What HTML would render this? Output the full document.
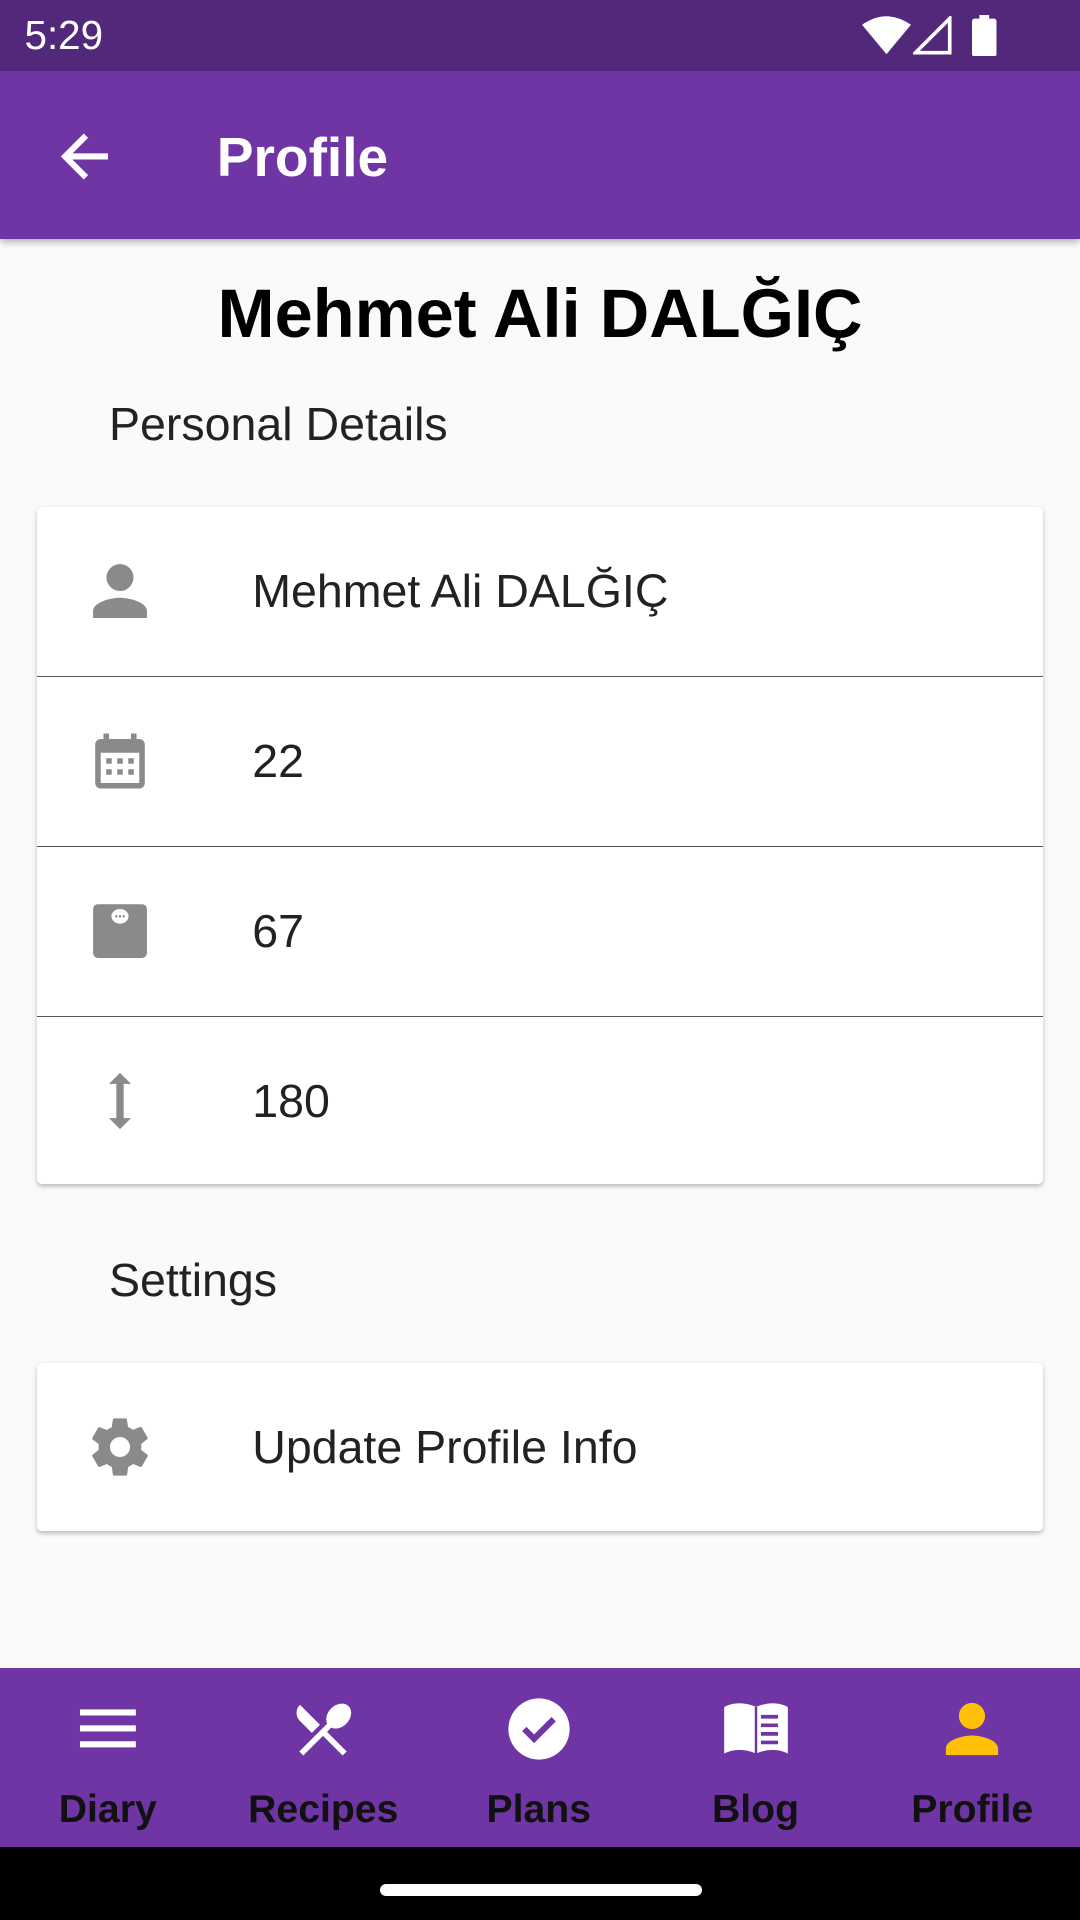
<!DOCTYPE html>
<html><head><meta charset="utf-8"><style>
html,body{margin:0;padding:0;width:1080px;height:1920px;overflow:hidden;background:#fafafa}
#w{zoom:1.22449;width:882px;height:1568px;position:relative;font-family:"Liberation Sans","DejaVu Sans",sans-serif}
.a{position:absolute}
.status{left:0;top:0;width:882px;height:58px;background:#52287a}
.bar{left:0;top:58px;width:882px;height:137px;background:#6f35a5;box-shadow:0 3px 6px rgba(0,0,0,.3)}
.card{left:30px;width:822px;background:#fff;border-radius:4px;box-shadow:0 2px 4px rgba(0,0,0,.25)}
.row{position:relative;height:138px;border-bottom:1px solid #555}
.row:last-child{border-bottom:none}
.row svg{position:absolute;left:68px;top:50%;transform:translate(-50%,-50%)}
.row span{position:absolute;left:176px;top:50%;transform:translateY(-50%);font-size:38px;color:#222}
.sec{font-size:38px;color:#222;left:89px}
.nav{left:0;top:1362px;width:882px;height:146px;background:#6f35a5}
.it{position:absolute;top:0;width:176px;height:146px;text-align:center}
.it svg{position:absolute;left:50%;top:50px;transform:translate(-50%,-50%)}
.it b{position:absolute;left:0;right:0;top:98px;font-size:32px;color:#111;font-weight:bold}
</style></head><body><div id="w">
<div class="a status"></div>
<div class="a" style="left:20px;top:10px;color:#fff;font-size:33px">5:29</div>
<svg class="a" style="left:704px;top:12px" width="40" height="32" viewBox="0 0 40 32"><path d="M0 8 Q20 -6 40 8 L20 32Z" fill="#fff"/></svg>
<svg class="a" style="left:746px;top:13px" width="32" height="32" viewBox="0 0 32 32"><path d="M30 2 L30 30 L2 30Z" fill="none" stroke="#fff" stroke-width="3"/></svg>
<svg class="a" style="left:794px;top:12px" width="20" height="34" viewBox="0 0 20 34"><rect x="6" y="0" width="8" height="4" fill="#fff"/><rect x="0" y="3" width="20" height="31" rx="2" fill="#fff"/></svg>
<div class="a bar"></div>
<svg class="a" style="left:48px;top:108px" width="42" height="40" viewBox="0 0 42 40"><path d="M40 20H6M22 3L5 20L22 37" fill="none" stroke="#fff" stroke-width="5"/></svg>
<div class="a" style="left:177px;top:102px;color:#fff;font-size:45px;font-weight:bold">Profile</div>
<div class="a" style="left:0;width:882px;top:224px;text-align:center;font-size:56px;font-weight:bold;color:#000">Mehmet Ali DALĞIÇ</div>
<div class="a sec" style="top:324px">Personal Details</div>
<div class="a card" style="top:414px;height:553px">
<div class="row"><svg width="66" height="66" viewBox="0 0 24 24"><path fill="#8a8a8a" d="M12 12c2.2 0 4-1.8 4-4s-1.8-4-4-4-4 1.8-4 4 1.8 4 4 4zm0 2c-2.7 0-8 1.3-8 4v2h16v-2c0-2.7-5.3-4-8-4z"/></svg><span>Mehmet Ali DALĞIÇ</span></div>
<div class="row"><svg width="54" height="54" viewBox="0 0 24 24"><path fill="#8a8a8a" d="M9 11H7v2h2v-2zm4 0h-2v2h2v-2zm4 0h-2v2h2v-2zm2-7h-1V2h-2v2H8V2H6v2H5c-1.1 0-2 .9-2 2v14c0 1.1.9 2 2 2h14c1.1 0 2-.9 2-2V6c0-1.1-.9-2-2-2zm0 16H5V9h14v11zM9 15H7v2h2v-2zm4 0h-2v2h2v-2zm4 0h-2v2h2v-2z"/></svg><span>22</span></div>
<div class="row"><svg width="44" height="44" viewBox="0 0 44 44"><rect x="0" y="0" width="44" height="44" rx="4" fill="#8a8a8a"/><ellipse cx="22" cy="10" rx="7" ry="6" fill="#fff"/><circle cx="19" cy="10" r="1" fill="#8a8a8a"/><circle cx="22" cy="10" r="1" fill="#8a8a8a"/><circle cx="25" cy="10" r="1" fill="#8a8a8a"/></svg><span>67</span></div>
<div class="row"><svg width="24" height="46" viewBox="0 0 24 46"><path fill="#8a8a8a" d="M12 0L21 9H15V37H21L12 46L3 37H9V9H3Z"/></svg><span>180</span></div>
</div>
<div class="a sec" style="top:1023px">Settings</div>
<div class="a card" style="top:1113px;height:137px">
<div class="row" style="height:137px;border:none"><svg width="56" height="56" viewBox="0 0 24 24"><path fill="#8a8a8a" d="M19.4 13c.04-.3.06-.6.06-1s-.02-.7-.06-1l2.1-1.7c.2-.15.24-.42.12-.64l-2-3.460c-.12-.22-.4-.3-.6-.22l-2.5 1c-.5-.4-1.1-.7-1.7-1l-.4-2.65C14.4 2.2 14.2 2 14 2h-4c-.25 0-.46.18-.5.42l-.37 2.65c-.6.25-1.170.6-1.7 1l-2.5-1c-.22-.08-.48 0-.6.22l-2 3.46c-.13.22-.07.5.12.64L4.57 11c-.04.3-.07.65-.07 1s.02.7.06 1l-2.1 1.65c-.2.15-.25.42-.13.64l2 3.46c.12.22.4.3.6.22l2.5-1c.52.4 1.08.73 1.7 1l.37 2.65c.04.24.25.42.5.42h4c.25 0 .46-.18.5-.42l.37-2.65c.6-.25 1.17-.6 1.7-1l2.5 1c.22.08.48 0 .6-.22l2-3.46c.12-.22.07-.5-.12-.64L19.4 13zM12 15.5c-1.93 0-3.5-1.57-3.5-3.5s1.57-3.5 3.5-3.5 3.5 1.57 3.5 3.5-1.57 3.5-3.5 3.5z"/></svg><span>Update Profile Info</span></div>
</div>
<div class="a nav">
<div class="it" style="left:0"><svg width="46" height="36" viewBox="0 0 46 36"><rect y="2" width="46" height="5" fill="#fff"/><rect y="15" width="46" height="5" fill="#fff"/><rect y="28" width="46" height="5" fill="#fff"/></svg><b>Diary</b></div>
<div class="it" style="left:176px"><svg width="56" height="56" viewBox="0 0 24 24"><path fill="#fff" d="M8.1 13.34l2.83-2.83L3.91 3.5c-1.56 1.56-1.56 4.09 0 5.66l4.19 4.18zm6.78-1.81c1.53.71 3.68.21 5.27-1.38 1.91-1.910 2.28-4.65.81-6.12-1.46-1.46-4.2-1.1-6.12.81-1.59 1.59-2.09 3.74-1.38 5.27L3.7 19.87l1.41 1.41L12 14.41l6.880 6.88 1.41-1.41L13.41 13l1.47-1.47z"/></svg><b>Recipes</b></div>
<div class="it" style="left:352px"><svg width="52" height="52" viewBox="0 0 52 52"><circle cx="26" cy="26" r="25" fill="#fff"/><path d="M14 26l8 8 16-16" fill="none" stroke="#6f35a5" stroke-width="5"/></svg><b>Plans</b></div>
<div class="it" style="left:529px"><svg width="56" height="44" viewBox="0 0 56 44"><path fill="#fff" d="M2 4Q14-2 28 4Q42-2 54 4V42Q42 36 28 42Q14 36 2 42Z"/><path d="M32 12h14M32 19h14M32 26h14M32 33h14" stroke="#6f35a5" stroke-width="3"/><path d="M28 4V42" stroke="#6f35a5" stroke-width="2"/></svg><b>Blog</b></div>
<div class="it" style="left:706px"><svg width="64" height="64" viewBox="0 0 24 24"><path fill="#ffc107" d="M12 12c2.2 0 4-1.8 4-4s-1.8-4-4-4-4 1.8-4 4 1.8 4 4 4zm0 2c-2.7 0-8 1.3-8 4v2h16v-2c0-2.7-5.3-4-8-4z"/></svg><b>Profile</b></div>
</div>
<div class="a" style="left:0;top:1508px;width:882px;height:60px;background:#000"></div>
<div class="a" style="left:310px;top:1539px;width:263px;height:9px;border-radius:5px;background:#fff"></div>
</div></body></html>
